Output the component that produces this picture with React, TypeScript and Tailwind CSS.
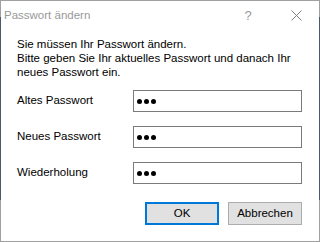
import React from "react";

const font = { fontFamily: '"Segoe UI", "Liberation Sans", Arial, sans-serif' };

const Dots: React.FC = () => (
  <div className="flex items-center gap-[2px]">
    <span className="block w-[5px] h-[5px] rounded-full bg-black" />
    <span className="block w-[5px] h-[5px] rounded-full bg-black" />
    <span className="block w-[5px] h-[5px] rounded-full bg-black" />
  </div>
);

const Row: React.FC<{ label: string }> = ({ label }) => (
  <div className="flex items-center h-[22px]">
    <div className="w-[116px] text-[11.5px] text-black whitespace-nowrap">{label}</div>
    <div className="flex-1 h-[22px] border border-[#7a7a7a] bg-white flex items-center pl-[3px]">
      <Dots />
    </div>
  </div>
);

const App: React.FC = () => {
  return (
    <div
      className="w-[320px] h-[242px] p-px bg-[linear-gradient(to_bottom,#a0a0a0_17px,#4a5a6e_17px,#4a5a6e_200px,#a0a0a0_200px)]"
      style={font}
    >
      <div className="w-full h-full bg-white flex flex-col">
        {/* title bar */}
        <div className="h-[29px] flex items-center pl-[3px] text-[11.5px] text-[#999999]">
          <span className="flex-1">Passwort ändern</span>
          <span className="w-[10px] text-[13px] text-center mr-[38px]">?</span>
          <svg width="11" height="11" viewBox="0 0 11 11" className="mr-[17px]">
            <path d="M0.5 0.5 L10.5 10.5 M10.5 0.5 L0.5 10.5" stroke="#808080" strokeWidth="1" />
          </svg>
        </div>

        <div className="flex-1 flex flex-col pl-[16px] pr-[17px] pt-[7px]">
          <p className="text-[11.5px] leading-[14px] text-black whitespace-nowrap">
            Sie müssen Ihr Passwort ändern.
            <br />
            Bitte geben Sie Ihr aktuelles Passwort und danach Ihr
            <br />
            neues Passwort ein.
          </p>

          <div className="flex flex-col gap-[14px] mt-[11px]">
            <Row label="Altes Passwort" />
            <Row label="Neues Passwort" />
            <Row label="Wiederholung" />
          </div>

          <div className="flex justify-end gap-[9px] mt-[18px]">
            <button className="w-[74px] h-[23px] bg-[#e1e1e1] border-2 border-[#0078d7] text-[11.5px] text-black">
              OK
            </button>
            <button className="w-[74px] h-[23px] bg-[#e1e1e1] border border-[#adadad] text-[11.5px] text-black">
              Abbrechen
            </button>
          </div>
        </div>
      </div>
    </div>
  );
};

export default App;
